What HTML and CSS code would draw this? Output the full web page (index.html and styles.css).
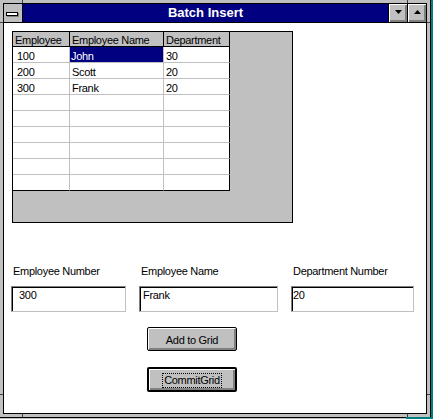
FILE: index.html
```html
<!DOCTYPE html>
<html>
<head>
<meta charset="utf-8">
<link rel="stylesheet" href="styles.css">
</head>
<body>
<div class="window">
  <div class="frame">
    <div class="titlebar">
      <div class="sysmenu"><span class="sysbar"></span></div>
      <div class="caption">Batch Insert</div>
      <div class="capbtn"><svg width="7" height="4" viewBox="0 0 7 4"><polygon points="0,0 7,0 3.5,4" fill="#000"/></svg></div>
      <div class="capbtn"><svg width="7" height="4" viewBox="0 0 7 4"><polygon points="3.5,0 7,4 0,4" fill="#000"/></svg></div>
    </div>
    <div class="client">
      <div class="gridbox">
        <div class="grid">
          <div class="hcell">Employee</div><div class="hcell">Employee Name</div><div class="hcell last">Department</div>
          <div class="cell c1">100</div><div class="cell sel">John</div><div class="cell last">30</div>
          <div class="cell c1">200</div><div class="cell">Scott</div><div class="cell last">20</div>
          <div class="cell c1">300</div><div class="cell">Frank</div><div class="cell last">20</div>
          <div class="cell c1"></div><div class="cell"></div><div class="cell last"></div>
          <div class="cell c1"></div><div class="cell"></div><div class="cell last"></div>
          <div class="cell c1"></div><div class="cell"></div><div class="cell last"></div>
          <div class="cell c1"></div><div class="cell"></div><div class="cell last"></div>
          <div class="cell c1"></div><div class="cell"></div><div class="cell last"></div>
          <div class="cell c1 bottom"></div><div class="cell bottom"></div><div class="cell last bottom"></div>
        </div>
      </div>
      <div class="fields">
        <div class="field f1"><div class="label">Employee Number</div><div class="edit">300</div></div>
        <div class="field f2"><div class="label">Employee Name</div><div class="edit">Frank</div></div>
        <div class="field f3"><div class="label">Department Number</div><div class="edit">20</div></div>
      </div>
      <div class="buttons">
        <div class="btn">Add to Grid</div>
        <div class="btn default"><span class="focus">CommitGrid</span></div>
      </div>
    </div>
  </div>
  <span class="notch nt1"></span><span class="notch nt2"></span>
  <span class="notch nb1"></span><span class="notch nb2"></span>
  <span class="notch nl1"></span><span class="notch nl2"></span>
  <span class="notch nr1"></span><span class="notch nr2"></span>
</div>
<div class="under"></div>
</body>
</html>
```
FILE: styles.css
```css
* { box-sizing: border-box; }
html, body { margin: 0; padding: 0; }
body {
  width: 433px;
  height: 419px;
  overflow: hidden;
  background: #008080;
  font-family: "Liberation Sans", Arial, sans-serif;
  font-size: 11px;
  letter-spacing: -0.3px;
  color: #000;
}
.window {
  position: relative;
  width: 431px;
  height: 417px;
  background: #c0c0c0;
  border-right: 1px solid #000;
  padding: 3px;
}
.frame {
  height: 100%;
  border: 1px solid #000;
  background: #fff;
  display: flex;
  flex-direction: column;
}
.titlebar {
  height: 19px;
  display: flex;
  border-bottom: 1px solid #000;
  flex: none;
}
.sysmenu {
  width: 19px;
  background: #c0c0c0;
  border-right: 1px solid #000;
  display: flex;
  align-items: center;
  padding-left: 2px;
}
.sysbar {
  display: block;
  width: 12px;
  height: 4px;
  background: #fff;
  border: 1px solid #000;
  box-shadow: 1px 1px 0 #808080;
  margin-top: 1px;
}
.caption {
  flex: 1;
  background: #000080;
  color: #fff;
  font-weight: bold;
  font-size: 13px;
  letter-spacing: 0;
  line-height: 18px;
  text-align: center;
}
.capbtn {
  width: 19px;
  border-left: 1px solid #000;
  background: #c0c0c0;
  box-shadow: inset 1px 1px 0 #fff, inset -2px -2px 0 #808080;
  display: flex;
  align-items: center;
  justify-content: center;
  padding-bottom: 2px;
}
.capbtn svg { display: block; }
.client {
  flex: 1;
  background: #fff;
}
.gridbox {
  margin: 8px 0 0 8px;
  width: 281px;
  height: 192px;
  border: 1px solid #000;
  background: #c0c0c0;
}
.grid {
  display: grid;
  grid-template-columns: 57px 94px 66px;
  width: 217px;
}
.hcell {
  height: 15px;
  background: #c0c0c0;
  border-right: 1px solid #000;
  border-bottom: 1px solid #000;
  padding-left: 2px;
  line-height: 17px;
  white-space: nowrap;
}
.cell {
  height: 16px;
  background: #fff;
  border-right: 1px solid #c0c0c0;
  border-bottom: 1px solid #c0c0c0;
  padding-left: 2px;
  line-height: 18px;
  white-space: nowrap;
}
.cell.c1 { padding-left: 4px; }
.cell.sel {
  background: #000080;
  color: #fff;
  padding-left: 1px;
}
.cell.last { border-right-color: #000; }
.cell.bottom { border-bottom-color: #000; }
.fields {
  display: flex;
  margin-top: 41px;
}
.field { display: flex; flex-direction: column; }
.f1 { margin-left: 7px; width: 115px; }
.f2 { margin-left: 13px; width: 139px; }
.f3 { margin-left: 13px; width: 123px; }
.label {
  height: 14px;
  line-height: 14px;
  padding-left: 2px;
  margin-bottom: 8px;
  white-space: nowrap;
}
.edit {
  height: 26px;
  border: 1px solid;
  border-color: #808080 #c0c0c0 #c0c0c0 #808080;
  box-shadow: inset 1px 1px 0 #000;
  line-height: 17px;
  padding-left: 3px;
}
.f1 .edit { padding-left: 7px; }
.f3 .edit { padding-left: 1px; }
.buttons {
  display: flex;
  flex-direction: column;
  margin: 15px 0 0 143px;
  gap: 16px;
}
.btn {
  width: 90px;
  height: 24px;
  border: 1px solid #000;
  border-radius: 2px;
  background: #c0c0c0;
  box-shadow: inset 1px 1px 0 #fff, inset -2px -2px 0 #808080;
  text-align: center;
  padding-top: 3px;
  line-height: 18px;
}
.btn.default {
  height: 25px;
  border-width: 2px;
  display: flex;
  justify-content: center;
  padding-top: 5px;
  line-height: 13px;
}
.focus {
  display: inline-block;
  height: 13px;
  outline: 1px dotted #000;
  padding: 0 1px;
}
.notch {
  position: absolute;
  background: #404040;
}
.nt1, .nt2, .nb1, .nb2 { width: 1px; height: 3px; }
.nl1, .nl2, .nr1, .nr2 { width: 3px; height: 1px; }
.nt1 { left: 22px; top: 0; }
.nt2 { left: 407px; top: 0; }
.nb1 { left: 22px; bottom: 0; }
.nb2 { left: 407px; bottom: 0; }
.nl1 { left: 0; top: 22px; }
.nl2 { left: 0; top: 394px; }
.nr1 { right: 0; top: 22px; }
.nr2 { right: 0; top: 394px; }
.under {
  width: 406px;
  height: 2px;
  border-top: 1px solid #000;
  background: #c0c0c0;
}
```
